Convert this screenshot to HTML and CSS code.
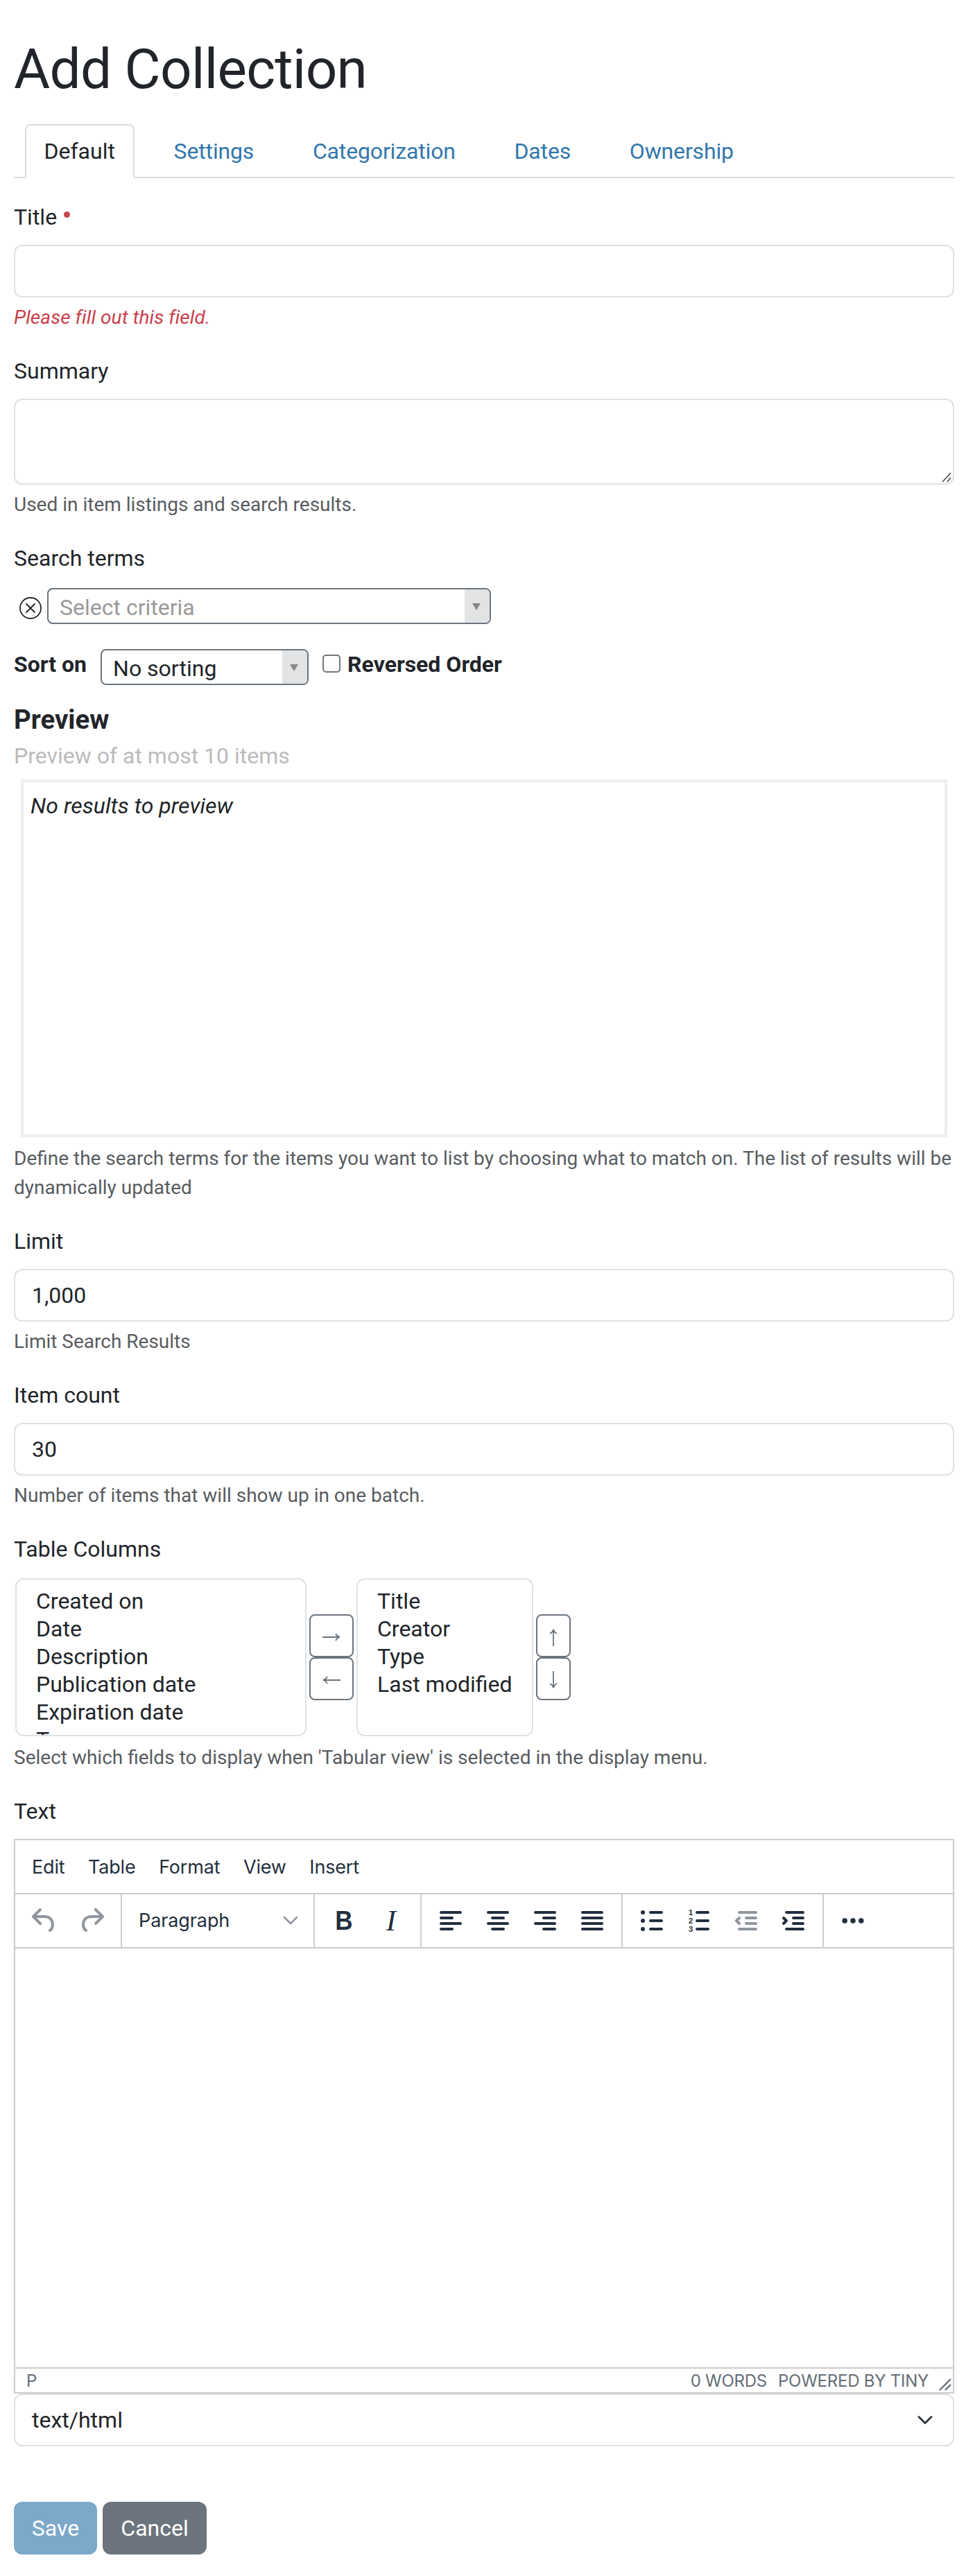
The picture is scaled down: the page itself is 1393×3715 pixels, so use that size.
FILE: index.html
```html
<!DOCTYPE html>
<html lang="en">
<head>
<meta charset="utf-8">
<title>Add Collection</title>
<link rel="stylesheet" href="styles.css">
</head>
<body>
<main class="page">
  <h1>Add Collection</h1>
  <nav class="tabs">
    <a class="tab active">Default</a>
    <a class="tab">Settings</a>
    <a class="tab">Categorization</a>
    <a class="tab">Dates</a>
    <a class="tab">Ownership</a>
  </nav>

  <section class="field">
    <div class="label">Title<span class="required"></span></div>
    <div class="control"></div>
    <div class="help error">Please fill out this field.</div>
  </section>

  <section class="field">
    <div class="label">Summary</div>
    <div class="control area">
      <svg class="grip" width="14" height="18" viewBox="0 0 14 18"><path d="M1 17 13 4M8 17l5-6"/></svg>
    </div>
    <div class="help">Used in item listings and search results.</div>
  </section>

  <section class="field">
    <div class="label">Search terms</div>
    <div class="criteria">
      <svg class="remove" width="32" height="32" viewBox="0 0 16 16"><circle cx="8" cy="8" r="7.5"/><path d="m5 5 6 6M11 5l-6 6"/></svg>
      <div class="picker wide"><span class="placeholder">Select criteria</span><span class="picker-arrow"><svg width="12" height="10" viewBox="0 0 12 10"><path d="M0 0h12L6 10z"/></svg></span></div>
    </div>
    <div class="sort">
      <span class="sort-label">Sort on</span>
      <div class="picker narrow"><span class="value">No sorting</span><span class="picker-arrow"><svg width="12" height="10" viewBox="0 0 12 10"><path d="M0 0h12L6 10z"/></svg></span></div>
      <span class="checkbox"></span>
      <span class="sort-label">Reversed Order</span>
    </div>
    <h2>Preview</h2>
    <div class="preview-note">Preview of at most 10 items</div>
    <div class="preview">No results to preview</div>
    <div class="help after-preview">Define the search terms for the items you want to list by choosing what to match on. The list of results will be dynamically updated</div>
  </section>

  <section class="field">
    <div class="label">Limit</div>
    <div class="control">1,000</div>
    <div class="help">Limit Search Results</div>
  </section>

  <section class="field">
    <div class="label">Item count</div>
    <div class="control">30</div>
    <div class="help">Number of items that will show up in one batch.</div>
  </section>

  <section class="field">
    <div class="label">Table Columns</div>
    <div class="columns">
      <ul class="list available">
        <li>Created on</li><li>Date</li><li>Description</li><li>Publication date</li><li>Expiration date</li><li>Type</li>
      </ul>
      <div class="movers">
        <button class="mover across"><svg width="28" height="16" viewBox="0 0 28 16"><path d="M1 8h25M20 3q2 4 6 5-4 1-6 5"/></svg></button>
        <button class="mover across"><svg width="28" height="16" viewBox="0 0 28 16"><path d="M27 8H2M8 3Q6 7 2 8q4 1 6 5"/></svg></button>
      </div>
      <ul class="list chosen">
        <li>Title</li><li>Creator</li><li>Type</li><li>Last modified</li>
      </ul>
      <div class="movers">
        <button class="mover updown"><svg width="16" height="26" viewBox="0 0 16 26"><path d="M8 26V2M3 8q4-2 5-6 1 4 5 6"/></svg></button>
        <button class="mover updown"><svg width="16" height="26" viewBox="0 0 16 26"><path d="M8 0v24M3 18q4 2 5 6 1-4 5-6"/></svg></button>
      </div>
    </div>
    <div class="help after-columns">Select which fields to display when 'Tabular view' is selected in the display menu.</div>
  </section>

  <section class="field">
    <div class="label">Text</div>
    <div class="editor">
      <div class="menubar"><span>Edit</span><span>Table</span><span>Format</span><span>View</span><span>Insert</span></div>
      <div class="toolbar">
        <div class="group">
          <span class="tool dim"><svg viewBox="0 0 24 24"><path d="M6.4 8H12c3.7 0 6.2 2 6.8 5.1.6 2.7-.4 5.6-2.3 6.8a1 1 0 0 1-1-1.8c1.1-.6 1.8-2.7 1.4-4.6-.5-2.1-2.1-3.5-4.9-3.5H6.4l3.3 3.3a1 1 0 1 1-1.4 1.4l-5-5a1 1 0 0 1 0-1.4l5-5a1 1 0 0 1 1.4 1.4L6.4 8Z"/></svg></span>
          <span class="tool dim"><svg viewBox="0 0 24 24"><path d="M17.6 10H12c-2.8 0-4.4 1.4-4.9 3.5-.4 2 .3 4 1.4 4.6a1 1 0 1 1-1 1.8c-2-1.2-2.9-4.1-2.3-6.8.6-3 3-5.1 6.8-5.1h5.6l-3.3-3.3a1 1 0 1 1 1.4-1.4l5 5a1 1 0 0 1 0 1.4l-5 5a1 1 0 0 1-1.4-1.4l3.3-3.3Z"/></svg></span>
        </div>
        <div class="group">
          <span class="blocks">Paragraph<svg width="22" height="14" viewBox="0 0 22 14"><path d="m2 2 9 9 9-9"/></svg></span>
        </div>
        <div class="group">
          <span class="tool bold">B</span>
          <span class="tool italic">I</span>
        </div>
        <div class="group">
          <span class="tool"><svg viewBox="0 0 24 24"><path class="bar" d="M5 6h14M5 10h8M5 14h14M5 18h8"/></svg></span>
          <span class="tool"><svg viewBox="0 0 24 24"><path class="bar" d="M5 6h14M8 10h8M5 14h14M8 18h8"/></svg></span>
          <span class="tool"><svg viewBox="0 0 24 24"><path class="bar" d="M5 6h14M11 10h8M5 14h14M11 18h8"/></svg></span>
          <span class="tool"><svg viewBox="0 0 24 24"><path class="bar" d="M5 6h14M5 10h14M5 14h14M5 18h14"/></svg></span>
        </div>
        <div class="group">
          <span class="tool"><svg viewBox="0 0 24 24"><path class="bar" d="M11 6h8M11 12h8M11 18h8"/><circle cx="5.5" cy="6" r="1.5"/><circle cx="5.5" cy="12" r="1.5"/><circle cx="5.5" cy="18" r="1.5"/></svg></span>
          <span class="tool"><svg viewBox="0 0 24 24"><path class="bar" d="M10.5 6h8M10.5 12h8M10.5 18h8"/><text x="4.5" y="7.9">1</text><text x="4.5" y="13.9">2</text><text x="4.5" y="19.9">3</text></svg></span>
          <span class="tool dim"><svg viewBox="0 0 24 24"><path class="bar" d="M7 6h12M12 10h7M12 14h7M7 18h12"/><path class="angle" d="M7 10l-2 2 2 2"/></svg></span>
          <span class="tool"><svg viewBox="0 0 24 24"><path class="bar" d="M7 6h12M12 10h7M12 14h7M7 18h12"/><path class="angle" d="m5 10 2 2-2 2"/></svg></span>
        </div>
        <div class="group last">
          <span class="tool"><svg viewBox="0 0 24 24"><circle cx="6.1" cy="12" r="1.9"/><circle cx="12" cy="12" r="1.9"/><circle cx="17.9" cy="12" r="1.9"/></svg></span>
        </div>
      </div>
      <div class="canvas"></div>
      <div class="statusbar">
        <span class="path">P</span><span class="words">0 words</span><span class="brand">Powered by Tiny</span>
        <svg class="resize" width="18" height="18" viewBox="0 0 18 18"><path d="M1 17 17 1M9 17l8-8"/></svg>
      </div>
    </div>
    <div class="control format">text/html<svg viewBox="0 0 16 16"><path d="m2 5 6 6 6-6"/></svg></div>
  </section>

  <div class="actions"><button class="btn save">Save</button><button class="btn cancel">Cancel</button></div>
</main>
</body>
</html>
```
FILE: styles.css
```css
* { box-sizing: border-box; }
body {
  margin: 0;
  background: #fff;
  color: #212529;
  font: 32px/48px Roboto, "Liberation Sans", sans-serif;
}
svg { display: block; flex: none; }
.page { width: 1376px; height: 3715px; padding: 52px 0 0 20px; }
h1 { margin: 0; font-size: 80px; line-height: 96px; font-weight: 400; letter-spacing: -0.68px; }

.tabs {
  display: flex;
  height: 78px;
  margin: 31px 0 32px;
  padding-left: 16px;
  border-bottom: 2px solid #dcdddf;
}
.tab { height: 78px; padding: 13px 26px; margin-right: 28.7px; color: #3277ad; border: 2px solid transparent; border-bottom: 0; line-height: 48px; letter-spacing: -0.15px; }
.tab.active { padding-left: 25.5px; color: #212529; background: #fff; border-color: #dcdddf; border-radius: 8px 8px 0 0; letter-spacing: 0; }

.field { margin-bottom: 32px; }
.label { display: flex; align-items: center; height: 48px; margin-bottom: 16px; }
.required { width: 9px; height: 9px; margin: -7px 0 0 10px; border-radius: 50%; background: #c9444d; }
.control {
  display: flex;
  height: 76px;
  padding: 12px 24px;
  border: 2px solid #dee2e6;
  border-radius: 12px;
}
.control.area { height: 124px; justify-content: flex-end; align-items: flex-end; padding: 0 2px 1px 0; }
.grip, .resize { fill: none; stroke: #555; stroke-width: 1.8; }
.help { margin-top: 8px; font-size: 28px; line-height: 42px; color: #585c60; }
.help.error { color: #c9404a; font-style: italic; letter-spacing: 0.06px; }

.criteria { display: flex; align-items: center; height: 52px; margin-top: 19px; padding-left: 8px; }
.remove { margin: 6px 8px 0 0; fill: none; stroke: #212529; stroke-linecap: round; stroke-width: .9; }
.picker {
  display: flex;
  justify-content: space-between;
  height: 52px;
  border: 2px solid #6c757d;
  border-radius: 8px;
  overflow: hidden;
  background: #fff;
}
.picker > span:first-child { padding-left: 16px; }
.picker.wide { width: 640px; }
.picker.narrow { width: 300px; margin: 2px 20px 0 20px; }
.placeholder { color: #999; line-height: 52px; }
.value { line-height: 52px; }
.picker-arrow { display: flex; align-items: center; width: 36px; padding: 2px 0 0 11px; background: #e1e3e5; fill: #888; }
.sort { display: flex; height: 54px; margin-top: 34px; }
.sort-label { font-weight: 700; line-height: 49px; }
.checkbox { width: 26px; height: 26px; margin: 10px 10px 0 0; border: 2px solid #767676; border-radius: 5px; }
h2 { margin: 25px 0 0; font-size: 38.4px; line-height: 49px; font-weight: 700; }
.preview-note { margin-top: 4px; color: #bbb; }
.preview { height: 516px; margin: 10px 10px 0; padding: 10px; border: 4px solid #eee; font-style: italic; letter-spacing: 0.06px; }
.after-preview { margin-top: 10px; }

.columns { display: flex; margin: 18px 0 0 2px; }
.list { height: 228px; margin: 0; padding: 11px 28px; border: 2px solid #dee2e6; border-radius: 12px; overflow: hidden; list-style: none; line-height: 40px; }
.available { width: 420px; }
.chosen { width: 255px; white-space: nowrap; }
.movers { display: flex; flex-direction: column; margin: 52px 4px 0; }
.mover { display: flex; align-items: center; justify-content: center; height: 62px; padding: 4px 0 0; background: #fff; border: 2px solid #6c757d; border-radius: 8px; fill: none; stroke: #6c757d; stroke-width: 1.8; }
.across { width: 64px; }
.updown { width: 50px; }
.after-columns { margin-top: 10px; }

.editor { border: 2px solid #ccc; color: #222f3e; font-family: Inter, "Liberation Sans", sans-serif; }
.menubar { display: flex; gap: 33.6px; height: 76px; padding-left: 24px; font-size: 27px; line-height: 78px; letter-spacing: -0.18px; }
.toolbar { display: flex; height: 80px; border: solid #ccc; border-width: 2px 0; }
.group { display: flex; align-items: center; padding: 0 8px; border-right: 2px solid #ccc; }
.group.last { border: 0; }
.tool { display: flex; align-items: center; justify-content: center; width: 68px; height: 56px; fill: #222f3e; stroke: none; }
.tool svg { width: 48px; height: 48px; }
.tool.dim { opacity: .5; }
.tool .bar { stroke: #222f3e; stroke-width: 2; stroke-linecap: round; fill: none; }
.tool .angle { stroke: #222f3e; stroke-width: 2; stroke-linecap: round; stroke-linejoin: round; fill: none; }
.tool text { font: 700 5.6px "Liberation Sans", sans-serif; }
.bold { font: 700 39px/56px "Liberation Sans", sans-serif; transform: scaleX(.9); }
.italic { font: italic 43px/56px "Liberation Serif", serif; }
.blocks { display: flex; align-items: center; justify-content: space-between; width: 260px; padding: 0 14px 0 16px; font-size: 27px; letter-spacing: -0.1px; }
.blocks svg { fill: none; stroke: #90979f; stroke-width: 2.6; stroke-linecap: round; stroke-linejoin: round; }
.canvas { height: 604px; }
.statusbar { display: flex; height: 36px; padding-left: 16px; border-top: 2px solid #ccc; color: #646d78; font-size: 24px; line-height: 36px; letter-spacing: -0.25px; text-transform: uppercase; }
.path { flex: 1; }
.brand { margin: 0 15px 0 16px; }
.resize { align-self: flex-end; margin: 0 2px 2px 0; stroke: #646d78; stroke-width: 2.4; }
.format { justify-content: space-between; align-items: center; }
.format svg { width: 24px; height: 24px; margin-right: 4px; fill: none; stroke: #343a40; stroke-width: 2; stroke-linecap: round; stroke-linejoin: round; }
.actions { display: flex; gap: 8px; margin-top: 80px; }
.btn { height: 76px; padding: 0; border: 0; border-radius: 12px; color: #fff; font: 32px/48px Roboto, sans-serif; }
.save { width: 120px; background: #7ca8ca; }
.cancel { width: 150px; background: #6c757d; }
```
